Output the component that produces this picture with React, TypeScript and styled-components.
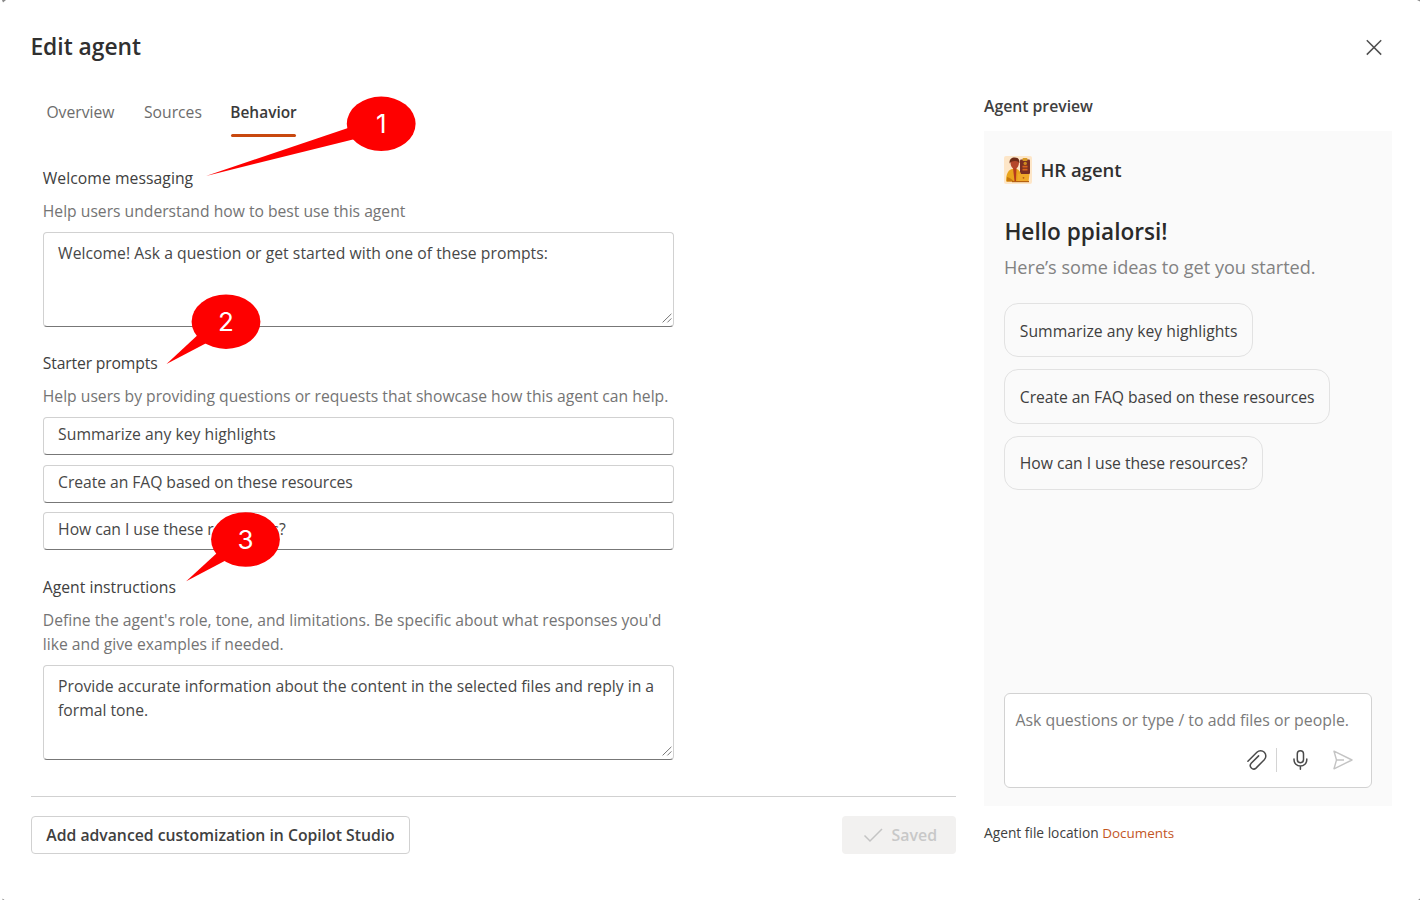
import React from "react";
import styled, { createGlobalStyle } from "styled-components";

const GlobalStyle = createGlobalStyle`
  * { box-sizing: border-box; }
  html, body { margin: 0; background: #ffffff; }
  body { font-family: "Open Sans", "Noto Sans", sans-serif; }
`;

const Dialog = styled.div`
  position: relative;
  display: flex;
  flex-direction: column;
  width: 1420px;
  height: 900px;
  overflow: hidden;
  background: #ffffff;
  color: #404040;
  font-size: 15.72px;
  line-height: 24px;
  white-space: nowrap;
`;

const DialogHeader = styled.header`
  display: flex;
  justify-content: space-between;
  height: 94px;
  padding: 31px 38px 0 30.4px;
`;

const Title = styled.h1`
  margin: 0;
  font-size: 22.8px;
  font-weight: 600;
  line-height: 32px;
  color: #303030;
`;

const CloseButton = styled.button`
  display: flex;
  align-items: flex-start;
  padding: 8px 0 0;
  border: 0;
  background: none;
`;

const Body = styled.div`
  display: flex;
  gap: 28px;
  padding-left: 31px;
`;

const Editor = styled.main`
  display: flex;
  flex-direction: column;
  width: 925px;
`;

const Tabs = styled.nav`
  display: flex;
  gap: 29.6px;
  padding: 6px 0 0 15.4px;
`;

const Tab = styled.div<{ $active?: boolean }>`
  height: 37px;
  margin-left: ${(p) => (p.$active ? "-1.2px" : "0")};
  font-size: ${(p) => (p.$active ? "15.45px" : "15.7px")};
  font-weight: ${(p) => (p.$active ? 600 : 400)};
  color: ${(p) => (p.$active ? "#3a3a3a" : "#6c6c6c")};

  &::after {
    content: "";
    display: block;
    height: 3.4px;
    margin: 9.7px 0.8px 0 0.4px;
    border-radius: 2px;
    background: ${(p) => (p.$active ? "#c8480f" : "transparent")};
  }
`;

const Form = styled.div`
  display: flex;
  flex-direction: column;
  gap: 24px;
  height: 659px;
  padding: 29px 0 0 11.8px;
`;

const Field = styled.section`
  display: flex;
  flex-direction: column;

  &:last-child { margin-top: 1.4px; }
`;

const Label = styled.div<{ $tracking?: number }>`
  letter-spacing: ${(p) => p.$tracking ?? 0}px;
`;

const Hint = styled.div`
  margin: 9px 0;
  font-size: 15.68px;
  line-height: 24px;
  color: #747474;
`;

const InputBox = styled.div<{ $tracking?: number }>`
  width: 631px;
  height: 38px;
  padding: 4px 14.3px 0;
  border: 1px solid #d1d1d1;
  border-bottom-color: #777777;
  border-radius: 4px;
  background: #ffffff;
  color: #474747;
  letter-spacing: ${(p) => p.$tracking ?? 0}px;
`;

const TextBox = styled(InputBox)`
  position: relative;
  height: 95px;
  padding-top: 8.6px;
  line-height: 23.8px;
`;

const Grip = styled.svg`
  position: absolute;
  right: 1px;
  bottom: 3px;
`;

const InputList = styled.div`
  display: flex;
  flex-direction: column;
  gap: 9.5px;
`;

const Footer = styled.footer`
  display: flex;
  justify-content: space-between;
  padding-top: 19px;
  border-top: 1px solid #d1d1d1;
`;

const OutlineButton = styled.button`
  height: 38px;
  width: 379px;
  padding: 0 0 1px;
  border: 1px solid #d1d1d1;
  border-radius: 4px;
  background: #ffffff;
  color: #404040;
  font: 600 15.76px "Open Sans", sans-serif;
`;

const SavedButton = styled.button`
  display: flex;
  align-items: center;
  gap: 8.6px;
  width: 114px;
  height: 38px;
  padding: 0 0 1px 21px;
  border: 0;
  border-radius: 4px;
  background: #f2f1f0;
  color: #c8c8c8;
  font: 600 15.9px "Open Sans", sans-serif;
`;

const Aside = styled.aside`
  display: flex;
  flex-direction: column;
  width: 408px;
`;

const AsideTitle = styled.h2`
  margin: 0;
  font-size: 15.75px;
  font-weight: 600;
  line-height: 24px;
  color: #404040;
`;

const Preview = styled.div`
  display: flex;
  flex-direction: column;
  height: 675px;
  margin-top: 13px;
  padding: 24.3px 19.6px 18px 20px;
  background: #fafafa;
`;

const AgentRow = styled.div`
  display: flex;
  align-items: center;
  gap: 8.4px;
`;

const AgentName = styled.div`
  padding-top: 1px;
  font-size: 18.5px;
  font-weight: 600;
  line-height: 28px;
  color: #303030;
`;

const Greeting = styled.div`
  margin-top: 31.4px;
  padding-left: 0.4px;
  font-size: 22.6px;
  font-weight: 600;
  line-height: 32px;
  color: #2a2a2a;
`;

const Intro = styled.div`
  margin-top: 7.6px;
  font-size: 18.1px;
  color: #828282;
`;

const Chips = styled.div`
  display: flex;
  flex-direction: column;
  align-items: flex-start;
  gap: 12px;
  margin-top: 23.7px;
`;

const Chip = styled.div<{ $tracking?: number }>`
  height: 54.3px;
  padding: 14.6px 14.6px 0 14.8px;
  border: 1px solid #e2e2e2;
  border-radius: 14px;
  letter-spacing: ${(p) => p.$tracking ?? 0}px;
`;

const Composer = styled.div`
  display: flex;
  flex-direction: column;
  justify-content: space-between;
  height: 95px;
  margin-top: auto;
  padding: 14px 17px 15px 10.4px;
  border: 1px solid #d2d2d2;
  border-radius: 6px;
  background: #ffffff;
`;

const Placeholder = styled.div`
  font-size: 15.87px;
  color: #7a7a7a;
`;

const Tools = styled.div`
  display: flex;
  justify-content: flex-end;
  align-items: center;
  height: 25px;
`;

const ToolDivider = styled.span`
  width: 1px;
  height: 24px;
  margin: 0 13px 0 8px;
  background: #d4d4d4;
`;

const SendIcon = styled.svg`
  margin-left: 21px;
`;

const FileLocation = styled.div`
  margin-top: 15px;
  font-size: 13.75px;
  color: #404040;
`;

const FileLink = styled.a`
  font-size: 13.45px;
  color: #c3561f;
`;

const CalloutLayer = styled.svg`
  position: absolute;
  inset: 0;
  pointer-events: none;
`;

const CalloutNumber = styled.text`
  font: 400 26px Inter, sans-serif;
  text-anchor: middle;
  fill: #ffffff;
`;

const ResizeGrip = () => (
  <Grip width="10" height="10" viewBox="0 0 10 10" fill="none" stroke="#777777" strokeWidth="1">
    <path d="M.6 9.4 9.4.8M5.4 9.4 9.4 5.4" />
  </Grip>
);

const AgentAvatar = () => (
  <svg width="28" height="28" viewBox="0 0 28 28">
    <rect width="28" height="28" rx="2" fill="#fde6c8" />
    <rect x="16" y="3.5" width="10" height="14.5" rx="1" fill="#7a2f22" />
    <rect x="18.5" y="2" width="5" height="3" rx="1" fill="#d89a25" />
    <circle cx="21.2" cy="7.4" r="1.7" fill="#d08a20" />
    <path d="M18.5 10.6h5M18.5 13.6h5" stroke="#d9641c" strokeWidth="1.6" />
    <path d="M2 25.5C2 18 4 13 10 12.5c5 .2 8 4 8 13z" fill="#e9a41c" />
    <path d="M3 21c3 1 5 2 7 4.5H3z" fill="#c9780f" />
    <path d="M9 12h3.5l-.5 13h-1.5z" fill="#b73a1c" />
    <path d="M6.5 6.5c0-3 2-4.5 4.3-4.5 2.6 0 4.4 1.6 4.2 4.7-.2 3.6-2 6-4.3 6-2.3 0-4.2-2.7-4.2-6.2z" fill="#b4472a" />
    <path d="M5.6 7.5C5 3.3 7.5 1.3 10.6 1.4c3.4 0 5.4 2.3 4.7 5.9-1-2-2.3-2.5-4.5-2.4C8.5 5 7 5.5 5.6 7.5z" fill="#6e2c18" />
    <path d="M14 18h11.5l-1 8h-11z" fill="#f0a92a" />
    <circle cx="19.5" cy="21.8" r=".9" fill="#b75a12" />
    <path d="M8 25h17v1.2H8z" fill="#b5600f" />
  </svg>
);

const callouts = [
  { n: "1", cx: 381.2, cy: 123.8, tail: "206,176 348,128 357,138.6" },
  { n: "2", cx: 226, cy: 321.7, tail: "166.5,364 198,334.8 207,342.7" },
  { n: "3", cx: 245.5, cy: 539.5, tail: "186.2,581.3 217.5,552.5 226.5,560" },
];

const prompts = [
  { text: "Summarize any key highlights", tracking: 0.02 },
  { text: "Create an FAQ based on these resources", tracking: -0.07 },
  { text: "How can I use these resources?", tracking: -0.05 },
];

export default function App() {
  return (
    <>
      <GlobalStyle />
      <Dialog>
        <DialogHeader>
          <Title>Edit agent</Title>
          <CloseButton aria-label="Close">
            <svg width="16" height="17" viewBox="0 0 16 17" stroke="#505050" strokeWidth="1.5">
              <path d="M.8 1.2 15.2 15.6M15.2 1.2.8 15.6" />
            </svg>
          </CloseButton>
        </DialogHeader>
        <Body>
          <Editor>
            <Tabs>
              <Tab>Overview</Tab>
              <Tab>Sources</Tab>
              <Tab $active>Behavior</Tab>
            </Tabs>
            <Form>
              <Field>
                <Label $tracking={0.05}>Welcome messaging</Label>
                <Hint>Help users understand how to best use this agent</Hint>
                <TextBox $tracking={0.03}>
                  Welcome! Ask a question or get started with one of these prompts:
                  <ResizeGrip />
                </TextBox>
              </Field>
              <Field>
                <Label $tracking={-0.16}>Starter prompts</Label>
                <Hint>Help users by providing questions or requests that showcase how this agent can help.</Hint>
                <InputList>
                  {prompts.map((p) => (
                    <InputBox key={p.text} $tracking={p.tracking}>{p.text}</InputBox>
                  ))}
                </InputList>
              </Field>
              <Field>
                <Label>Agent instructions</Label>
                <Hint>
                  Define the agent's role, tone, and limitations. Be specific about what responses you'd
                  <br />
                  like and give examples if needed.
                </Hint>
                <TextBox $tracking={-0.01}>
                  Provide accurate information about the content in the selected files and reply in a
                  <br />
                  formal tone.
                  <ResizeGrip />
                </TextBox>
              </Field>
            </Form>
            <Footer>
              <OutlineButton>Add advanced customization in Copilot Studio</OutlineButton>
              <SavedButton>
                <svg width="20" height="16" viewBox="0 0 20 16" fill="none" stroke="#c4c4c4" strokeWidth="1.5">
                  <path d="M1.5 8.5 7 14 19 2" />
                </svg>
                Saved
              </SavedButton>
            </Footer>
          </Editor>
          <Aside>
            <AsideTitle>Agent preview</AsideTitle>
            <Preview>
              <AgentRow>
                <AgentAvatar />
                <AgentName>HR agent</AgentName>
              </AgentRow>
              <Greeting>Hello ppialorsi!</Greeting>
              <Intro>Here’s some ideas to get you started.</Intro>
              <Chips>
                {prompts.map((p) => (
                  <Chip key={p.text} $tracking={p.tracking}>{p.text}</Chip>
                ))}
              </Chips>
              <Composer>
                <Placeholder>Ask questions or type / to add files or people.</Placeholder>
                <Tools>
                  <svg width="22" height="22" viewBox="0 0 22 22" fill="none" stroke="#4a4a4a" strokeWidth="1.5" strokeLinecap="round">
                    <path d="M1.9 12.3 10.9 3.3a5.2 5.2 0 0 1 7.4 7.4L10 19.1a3.4 3.4 0 0 1-4.8-4.8L12.6 6.9" />
                  </svg>
                  <ToolDivider />
                  <svg width="21" height="22" viewBox="0 0 21 22" fill="none" stroke="#4a4a4a" strokeWidth="1.5" strokeLinecap="round">
                    <rect x="7.3" y="1.7" width="6.2" height="12" rx="3.1" />
                    <path d="M4 10v.7a6.4 6.4 0 0 0 12.8 0V10M10.4 17.2v3" />
                  </svg>
                  <SendIcon width="22" height="22" viewBox="0 0 22 22" fill="none" stroke="#c4c4c4" strokeWidth="1.4" strokeLinejoin="round">
                    <path d="M2 2.2 20 11 2 19.8 4.5 11zM4.5 11H12" />
                  </SendIcon>
                </Tools>
              </Composer>
            </Preview>
            <FileLocation>
              Agent file location <FileLink>Documents</FileLink>
            </FileLocation>
          </Aside>
        </Body>
        <CalloutLayer width="1420" height="900" viewBox="0 0 1420 900">
          <path d="M2 0h4L3 2.5z" fill="#8a8a8a" />
          <path d="M1417 0h3v1.5z" fill="#8a8a8a" />
          <path d="M2.5 898.5l2 1.5h-2zM1418 900l2-1.5v1.5z" fill="#8a8a8a" />
          {callouts.map((c) => (
            <g key={c.n} fill="#fe0000">
              <polygon points={c.tail} />
              <ellipse cx={c.cx} cy={c.cy} rx="34.4" ry="27.2" />
              <CalloutNumber x={c.cx} y={c.cy + 9.5}>{c.n}</CalloutNumber>
            </g>
          ))}
        </CalloutLayer>
      </Dialog>
    </>
  );
}
